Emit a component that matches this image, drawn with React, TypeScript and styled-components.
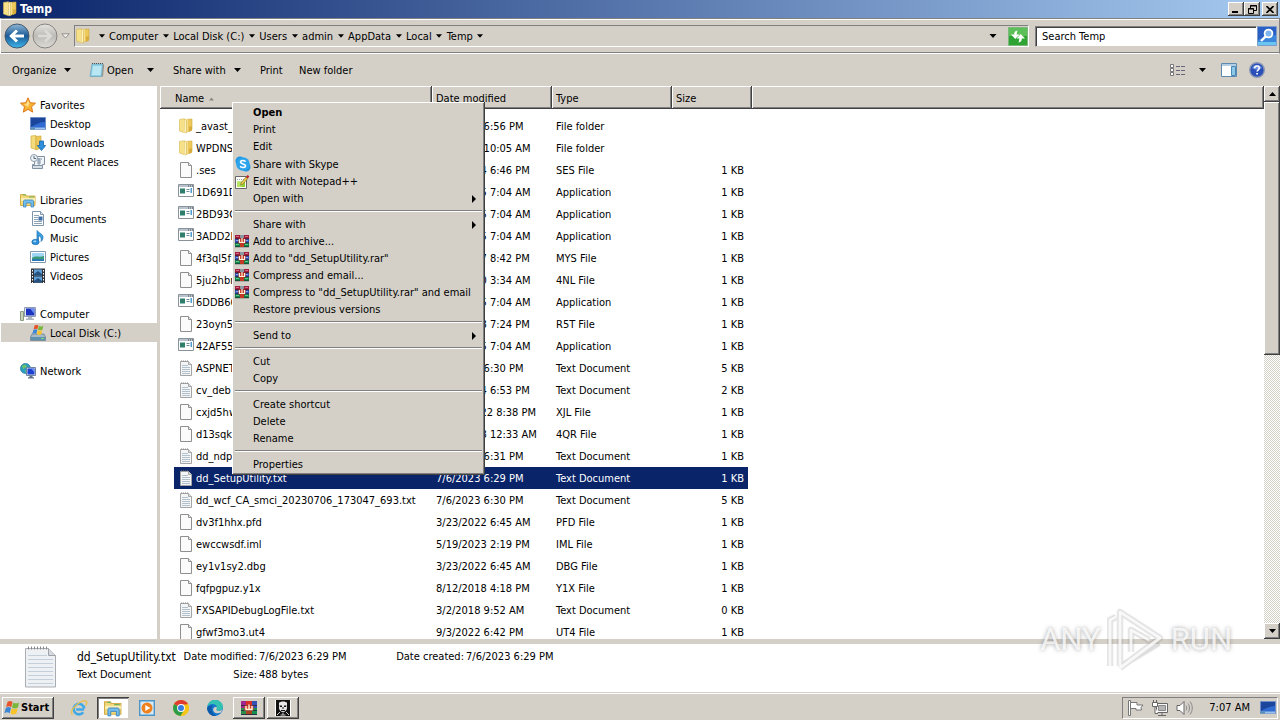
import React from "react";
import styled, { createGlobalStyle, css } from "styled-components";

const FONT = `Tahoma, "DejaVu Sans Condensed", "DejaVu Sans", sans-serif`;
const FACE = "#d4d0c8";

const Global = createGlobalStyle`
  *, *::before { box-sizing: border-box; }
  html, body { margin: 0; height: 100%; }
  #root { height: 100%; }
  body { font: 11px/17px ${FONT}; color: #000; background: ${FACE}; overflow: hidden; }
  button, input { font: inherit; color: inherit; margin: 0; padding: 0; border: 0; background: none; border-radius: 0; }
  a { color: inherit; text-decoration: none; }
  ul { list-style: none; margin: 0; padding: 0; }
  svg { display: block; flex: none; }
`;

const raised = css`
  background: ${FACE};
  box-shadow: inset -1px -1px #404040, inset 1px 1px #fff, inset -2px -2px #808080;
`;

const Window = styled.div`
  display: flex;
  flex-direction: column;
  height: 100vh;
  position: relative;
`;

/* Title bar */
const TitleBar = styled.header`
  display: flex;
  align-items: center;
  height: 18px;
  padding: 0 2px;
  background: linear-gradient(to right, #0a246a, #a6caf0);
  color: #fff;
`;
const Title = styled.h1`
  margin: 0 auto 0 2px;
  font: bold 12px/17px ${FONT};
`;
const CaptionButton = styled.button<{ $gap?: boolean }>`
  ${raised}
  display: grid;
  place-items: center;
  width: 16px;
  height: 14px;
  margin-left: ${(p) => (p.$gap ? 2 : 0)}px;
`;

/* Address row */
const NavBar = styled.nav`
  display: flex;
  align-items: center;
  height: 36px;
  padding: 0 2px;
  border: 1px solid #808080;
  border-left-color: #fff;
  border-bottom-color: #fff;
  box-shadow: inset 0 1px #fff, inset 0 -1px #808080;
`;
const RoundButton = styled.button`
  width: 28px;
  height: 28px;
  display: grid;
  place-items: center;
`;
const SmallButton = styled.button`
  width: 15px;
  height: 22px;
  padding-right: 3px;
  display: grid;
  place-items: center;
`;
const AddressBox = styled.div`
  flex: 1;
  display: flex;
  align-items: center;
  height: 22px;
  border: 1px solid #808080;
  border-bottom-color: #fff;
  border-right-color: #fff;
`;
const Crumbs = styled.div`
  display: flex;
  align-items: center;
  margin-left: 4px;
  flex: 1;
`;
const Crumb = styled.a`
  display: block;
  padding: 0 1px;
`;
const CrumbArrow = styled.button`
  width: 13px;
  height: 20px;
  display: grid;
  place-items: center;
`;
const IconButton = styled.button<{ $w?: number }>`
  width: ${(p) => p.$w ?? 20}px;
  height: 20px;
  display: grid;
  place-items: center;
`;
const SearchInput = styled.input`
  width: 222px;
  height: 21px;
  margin-left: 6px;
  padding: 0 6px;
  background: #fff;
  border: 1px solid #808080;
  border-right-color: #fff;
  border-bottom-color: ${FACE};
  box-shadow: inset 1px 1px #404040;
  &::placeholder { color: #000; opacity: 1; }
`;

/* Command row */
const Toolbar = styled.div`
  display: flex;
  align-items: center;
  height: 32px;
  padding: 0 12px;
`;
const Command = styled.button<{ $w: number }>`
  display: flex;
  align-items: center;
  width: ${(p) => p.$w}px;
  height: 24px;
  white-space: nowrap;
`;
const CommandArrow = styled.span`
  margin: 0 19px 0 auto;
`;
const CommandIcon = styled.span`
  margin: 0 2px 0 -1px;
`;
const ToolSpacer = styled.div`
  flex: 1;
`;

/* Main area */
const Body = styled.div`
  flex: 1;
  min-height: 0;
  display: flex;
`;
const Sidebar = styled.aside`
  width: 157px;
  padding-top: 9px;
  background: #fff;
`;
const Splitter = styled.div`
  width: 3px;
  background: ${FACE};
`;
const TreeGroup = styled.ul`
  margin-bottom: 19px;
`;
const TreeItem = styled.a<{ $child?: boolean; $selected?: boolean }>`
  display: flex;
  align-items: center;
  gap: 4px;
  height: 19px;
  margin-left: 1px;
  padding-left: ${(p) => (p.$child ? 29 : 19)}px;
  background: ${(p) => (p.$selected ? FACE : "transparent")};
`;
const TreeLabel = styled.span`
  padding-top: 2px;
`;

const ListPane = styled.main`
  flex: 1;
  min-width: 0;
  overflow: hidden;
  background: #fff;
`;
const FileTable = styled.table`
  display: block;
  border-collapse: collapse;
`;
const Head = styled.thead`
  display: block;
`;
const HeadRow = styled.tr`
  display: grid;
  grid-template-columns: 272px 120px 120px 80px 1fr;
  height: 23px;
`;
const HeadCell = styled.th`
  ${raised}
  display: flex;
  align-items: center;
  gap: 5px;
  padding: 2px 0 0 4px;
  font-weight: normal;
  text-align: left;
  &:first-child { padding-left: 15px; }
`;
const Rows = styled.tbody`
  display: block;
  padding: 6px 0 0 14px;
`;
const FileRow = styled.tr<{ $selected?: boolean }>`
  display: grid;
  grid-template-columns: 258px 120px 120px 76px;
  align-items: center;
  width: 574px;
  height: 22px;
  ${(p) => p.$selected && css`background: #0a246a; color: #fff;`}
`;
const Cell = styled.td<{ $right?: boolean }>`
  padding: 0 4px;
  white-space: nowrap;
  text-align: ${(p) => (p.$right ? "right" : "left")};
`;
const NameCell = styled.td`
  display: flex;
  align-items: center;
  gap: 2px;
  padding: 0 0 0 4px;
  white-space: nowrap;
`;

const Scrollbar = styled.div`
  display: flex;
  flex-direction: column;
  width: 16px;
  background: repeating-conic-gradient(#fff 0 25%, ${FACE} 0 50%) 0 0 / 2px 2px;
`;
const ScrollButton = styled.button`
  ${raised}
  width: 16px;
  height: 16px;
  display: grid;
  place-items: center;
`;
const Thumb = styled.div`
  ${raised}
  height: 253px;
  margin-bottom: auto;
`;

/* Details pane */
const Details = styled.section`
  display: flex;
  height: 53px;
  padding: 2px 0 0 24px;
  border-top: 5px solid ${FACE};
  background: #fff;
`;
const DetailGrid = styled.div`
  display: grid;
  grid-template-columns: 106px 76px 134px 73px auto;
  grid-template-rows: 18px 18px;
  line-height: 18px;
  margin: 2px 0 0 20px;
  white-space: nowrap;
`;
const DetailName = styled.strong`
  font-weight: normal;
  font-size: 12px;
`;
const DetailLabel = styled.span`
  padding-right: 2px;
  text-align: right;
`;

/* Taskbar */
const Taskbar = styled.footer`
  display: flex;
  align-items: center;
  height: 28px;
  padding: 2px 2px 0;
  border-top: 1px solid ${FACE};
  box-shadow: inset 0 1px #fff;
`;
const StartButton = styled.button`
  ${raised}
  display: flex;
  align-items: center;
  gap: 1px;
  width: 52px;
  height: 22px;
  margin-right: 9px;
  padding-left: 2px;
  font-weight: bold;
`;
const TaskButton = styled.button<{ $state?: "open" | "active" }>`
  display: grid;
  place-items: center;
  width: 32px;
  height: 22px;
  margin-right: 2px;
  ${(p) => p.$state === "open" && raised}
  ${(p) =>
    p.$state === "active" &&
    css`background: #fff; box-shadow: inset 1px 1px #404040, inset -1px -1px #d4d0c8, inset 2px 2px #808080;`}
`;
const Tray = styled.div`
  display: flex;
  align-items: center;
  gap: 8px;
  height: 22px;
  margin-left: auto;
  padding: 0 1px 0 5px;
  border: 1px solid #808080;
  border-right-color: #fff;
  border-bottom-color: #fff;
`;
const Clock = styled.time`
  margin: 0 2px 0 8px;
`;

/* Context menu */
const Menu = styled.ul`
  position: absolute;
  left: 232px;
  top: 102px;
  width: 253px;
  padding: 2px;
  background: ${FACE};
  box-shadow: inset -1px -1px #404040, inset 1px 1px #fff, inset -2px -2px #808080;
`;
const MenuItem = styled.button<{ $bold?: boolean; $tall?: boolean }>`
  display: grid;
  grid-template-columns: 19px 1fr 12px;
  align-items: center;
  width: 100%;
  height: ${(p) => (p.$tall ? 18 : 17)}px;
  font-weight: ${(p) => (p.$bold ? "bold" : "normal")};
  text-align: left;
  white-space: nowrap;
`;
const MenuIcon = styled.span`
  height: 16px;
  padding-left: 1px;
`;
const Separator = styled.li`
  height: 9px;
  padding: 3px 1px;
  &::before {
    content: "";
    display: block;
    height: 2px;
    border-top: 1px solid #808080;
    border-bottom: 1px solid #fff;
  }
`;

const Watermark = styled.div`
  position: absolute;
  right: 48px;
  bottom: 46px;
  display: flex;
  align-items: center;
  gap: 6px;
  height: 68px;
  color: rgba(255, 255, 255, 0.8);
  font: 31px/68px Roboto, sans-serif;
  text-shadow: 0 0 4px rgba(100, 100, 100, 0.6);
  pointer-events: none;
`;

/* Icons */
const Svg = ({ w = 16, h = 16, box, children }: { w?: number; h?: number; box?: string; children: React.ReactNode }) => (
  <svg width={w} height={h} viewBox={box ?? `0 0 ${w} ${h}`} aria-hidden="true">{children}</svg>
);
const Down = ({ w = 7, fill = "#000" }: { w?: number; fill?: string }) => (
  <svg width={w} height={4} viewBox="0 0 7 4" aria-hidden="true"><path d="M0 0h7L3.5 4z" fill={fill} /></svg>
);
const CrumbDown = () => <Down w={6} />;
const Up = ({ fill = "#000", w = 7 }: { w?: number; fill?: string }) => (
  <svg width={w} height={4} viewBox="0 0 7 4" aria-hidden="true"><path d="M0 4h7L3.5 0z" fill={fill} /></svg>
);
const Right = () => (
  <svg width={5} height={8} viewBox="0 0 5 8" aria-hidden="true"><path d="M1 0v8l4-4z" fill="#000" /></svg>
);

const FolderIcon = () => (
  <Svg>
    <path d="M1.500 1.500l5-.8v14l-5-1.700z" fill="#f6e08a" stroke="#d9b84c" strokeWidth=".6" />
    <path d="M6.500 1.500L14 1v10.500L7.500 15z" fill="#ecc95a" stroke="#cfa93d" strokeWidth=".6" />
    <path d="M6.500 1.800l3-.6v12.600l-3 .9z" fill="#fdf2bc" />
    <path d="M8.500 2v12" stroke="#d9b84c" strokeWidth=".7" />
    <path d="M11 8.500h3v4L11 14z" fill="#d8ac3c" />
  </Svg>
);
const BlankIcon = () => (
  <Svg>
    <path d="M2.500.5h8l3 3v12h-11z" fill="#fbfbfb" stroke="#8f8f8f" />
    <path d="M10.500.5v3h3" fill="#e8e8e8" stroke="#8f8f8f" />
  </Svg>
);
const TextIcon = () => (
  <Svg>
    <path d="M2.500 1.500h8l3 3v11h-11z" fill="#f3f5f7" stroke="#a4a4a4" />
    <path d="M10.500 1.500v3h3" fill="#ddd" stroke="#a4a4a4" />
    <path d="M3 1h8" stroke="#888" strokeDasharray="1 1" />
    <path d="M4 5.500h6M4 7.500h8M4 9.500h8M4 11.500h8M4 13.500h8" stroke="#b2c0cc" />
  </Svg>
);
const ExeIcon = () => (
  <Svg>
    <path d="M.5.5h15v12H.5z" fill="#fff" stroke="#8a9299" />
    <path d="M1 1h14v2H1z" fill="#b9c3cd" />
    <path d="M10 2h1M12 2h1M14 2h1" stroke="#445" />
    <path d="M2 4.500h5v5H2z" fill="#2f7d6b" />
    <path d="M8.500 5.500h3M8.500 7.500h3" stroke="#6f8c9a" />
    <path d="M12.500 4h1.500v5h-1.500z" fill="#4c9bd0" />
  </Svg>
);
const StarIcon = () => (
  <Svg>
    <path d="M8 .8l2.200 4.900 5.300.5-4 3.600 1.200 5.300L8 12.400l-4.700 2.700 1.200-5.300-4-3.600 5.300-.5z" fill="#f9b233" stroke="#d9771c" />
    <path d="M8 3l1.400 3.500L8 10 4 7l2.600-.4z" fill="#ffe08a" />
  </Svg>
);
const MonitorIcon = () => (
  <Svg>
    <path d="M.5 1.500h15v12H.5z" fill="#2f6bd0" stroke="#6d8ec9" />
    <path d="M1 2h14v4C10 6 6 8 1 11z" fill="#1c459c" />
    <path d="M1 11.500h14v2H1z" fill="#9fc0ea" />
    <path d="M1 11.500h4v2H1z" fill="#5b8fae" />
  </Svg>
);
const DownloadsIcon = () => (
  <Svg>
    <path d="M1 1l5-.5v14L1 13z" fill="#f4dc7c" stroke="#d1ad45" strokeWidth=".7" />
    <path d="M6 1.500l5-.5v12l-5 2z" fill="#ecc95a" stroke="#cfa93d" strokeWidth=".7" />
    <path d="M9.500 6h4v4.500h2.200L11.500 15.500 7.300 10.500h2.200z" fill="#2f8fdc" stroke="#1464ab" strokeWidth=".8" />
  </Svg>
);
const RecentIcon = () => (
  <Svg>
    <path d="M4.500 2.500h10v8h-2v3h-10v-3h2z" fill="#f2f5f8" stroke="#8091a1" />
    <path d="M7 5h5M7 7h4M7 9h4M9 4v7" stroke="#8095a8" />
    <path d="M2.500 11.500h10v3h-10z" fill="#d7dfe6" stroke="#8091a1" />
    <circle cx="4" cy="4" r="3.500" fill="#eef3f7" stroke="#8b9cab" />
    <path d="M4 2v2.500h2" fill="none" stroke="#567" />
  </Svg>
);
const LibraryIcon = ({ w = 16 }: { w?: number }) => (
  <Svg w={w} h={w} box="0 0 16 16">
    <path d="M.5 2.500h5l1 1.500h8.500v9.500H.5z" fill="#f2d878" stroke="#d3ae48" />
    <path d="M1 6h14v3H1z" fill="#fbeeb5" />
    <path d="M3 3h3M9 5h5" stroke="#6fb25c" />
    <path d="M3.500 15V9.500c0-1 .5-1.500 1.500-1.500h7c1 0 1.500.5 1.500 1.500V15h-2.500v-4H6v4z" fill="#74bdec" stroke="#3a86bf" strokeWidth=".8" />
  </Svg>
);
const DocumentsIcon = () => (
  <Svg>
    <path d="M2.500.5h8l3 3v11h-11z" fill="#fff" stroke="#7f95ab" />
    <path d="M10.500.5v3h3" fill="#dbe5ee" stroke="#7f95ab" />
    <path d="M4 4.500h5M4 6.500h4M4 8.500h4M4 10.500h8M4 12.500h8" stroke="#8fa3b6" />
    <path d="M8.500 5.500h4v4h-4z" fill="#3f6ea6" />
  </Svg>
);
const MusicIcon = () => (
  <Svg>
    <path d="M7 .5c2 3 6 3 6 7 0 2-1 3-2 4 1-4-1-5-2.500-6V12H7z" fill="#3aa0e2" stroke="#1c6fb0" strokeWidth=".7" />
    <ellipse cx="5.500" cy="12" rx="3.700" ry="2.700" fill="#2f8fd8" stroke="#1c6fb0" strokeWidth=".7" />
    <ellipse cx="4.800" cy="11.300" rx="1.500" ry=".9" fill="#a6dcfa" />
  </Svg>
);
const PicturesIcon = () => (
  <Svg>
    <path d="M.5 2.500h15v11H.5z" fill="#fff" stroke="#8299ad" />
    <path d="M2 4h12v8H2z" fill="#9fd6f5" />
    <path d="M2 9c4-3 7 0 12-2v5H2z" fill="#3a9a78" />
    <path d="M2 10.500c4-1 8 0 12-.5v2H2z" fill="#2879b5" />
  </Svg>
);
const VideosIcon = () => (
  <Svg>
    <path d="M1 .5h14v14.500H1z" fill="#30343a" />
    <path d="M4 1.500h8v6H4zM4 8.500h8v6H4z" fill="#5e9fd8" />
    <path d="M4 6l4-3 4 3v1.500H4zM4 13l4-3 4 3v1.500H4z" fill="#28507c" />
    <path d="M2.500 2v13M13.500 2v13" stroke="#fff" strokeDasharray="1.500 1.500" />
  </Svg>
);
const ComputerIcon = () => (
  <Svg>
    <path d="M.5 5.500h3v9h-3z" fill="#c8d6b8" stroke="#8a9a80" />
    <path d="M4.500 1.500h11v9h-11z" fill="#dfe6ee" stroke="#8d9cb0" />
    <path d="M6 2.500h8.500v7H6z" fill="#1b35c0" />
    <path d="M10 2.500h4.500V8z" fill="#6e8ff0" />
    <path d="M8 11h4v1.500h2V14H6v-1.500h2z" fill="#aab5c0" />
  </Svg>
);
const Flag = () => (
  <>
    <path d="M3.500 2c2-1.300 3.500-1.200 5 0L7.200 7.200C5.600 6 4 6 2 7.200z" fill="#e8542a" />
    <path d="M9.200 2.400c2 1.200 3.800 1.200 6 0L13.900 7.500c-2.200 1.200-4 1.200-6 0z" fill="#7ab83c" />
    <path d="M1.800 8c2-1.300 3.600-1.200 5.200 0l-1.300 5.200C4.100 12 2.500 12 .4 13.200z" fill="#3c86d6" />
    <path d="M7.700 8.300c2 1.200 3.800 1.200 6 0l-1.300 5.200c-2.200 1.200-4 1.200-6 0z" fill="#f8c22c" />
  </>
);
const WindowsFlag = () => <Svg><Flag /></Svg>;
const DiskIcon = () => (
  <Svg>
    <path d="M2 9h12l1.500 3v3.500H.5V12z" fill="#a9bac7" stroke="#6a8193" strokeWidth=".8" />
    <path d="M1 12h14v3H1z" fill="#5f93ad" />
    <path d="M11.500 13.500h2" stroke="#7dff6a" />
    <g transform="translate(2 -1) scale(.75)"><Flag /></g>
  </Svg>
);
const NetworkIcon = () => (
  <Svg>
    <circle cx="5.500" cy="5.500" r="5" fill="#2a9fc0" stroke="#176f98" strokeWidth=".7" />
    <path d="M2 3c2-2 4-1 5 0L5 5 3 6zM5 7l3 1-2 2.500z" fill="#6cc26a" />
    <path d="M6.500 4.500h9v8h-9z" fill="#dfe6ee" stroke="#6f83a0" />
    <path d="M7.500 5.500h7v6h-7z" fill="#1b3fd0" />
    <path d="M11 5.500h3.500v4z" fill="#6e8ff0" />
    <path d="M9.500 13h3v1.200h1.500v1.300H8v-1.300h1.500z" fill="#5f7088" />
  </Svg>
);
const SkypeIcon = () => (
  <Svg>
    <circle cx="5" cy="5" r="4.500" fill="#2196e3" />
    <circle cx="11" cy="11" r="4.500" fill="#2196e3" />
    <circle cx="8" cy="8" r="6.800" fill="#2ba4ec" />
    <path d="M10.500 5.800C9.800 4 5.500 4 5.500 6.100c0 2.300 5 1.300 5 3.700 0 2.300-4.600 2.300-5.200.3" fill="none" stroke="#fff" strokeWidth="1.600" />
  </Svg>
);
const NotepadPlusIcon = () => (
  <Svg w={15} h={15} box="0 1 15 15">
    <path d="M.5 3.500h11v12H.5z" fill="#fff" stroke="#666" />
    <path d="M2 8.500h8V14H2z" fill="#8fd02f" />
    <path d="M2 8.500h3l3 3-2 2.500H2z" fill="#b8e465" />
    <path d="M2 6.500h7" stroke="#9aa" strokeDasharray="1 1" />
    <path d="M6 10l5-6 1.800 1.400-5 5.800-2.200 1z" fill="#f2d04b" stroke="#6b5a20" strokeWidth=".6" />
    <path d="M11 4l1.500-2 1.900 1.300-1.600 2.100z" fill="#c3262c" />
  </Svg>
);
const RarIcon = () => (
  <Svg w={14} h={14} box="0 0 14 14">
    <path d="M0 1h14v4H0z" fill="#a01c3c" />
    <path d="M0 5h14v4H0z" fill="#3452b4" />
    <path d="M0 9h14v4H0z" fill="#12854a" />
    <path d="M1 2.500h3M10 2.500h3" stroke="#d66a84" />
    <path d="M1 6.500h3M10 6.500h3" stroke="#8aa6ea" />
    <path d="M1 10.500h3M10 10.500h3" stroke="#62c690" />
    <path d="M0 4.800h14M0 8.800h14M0 12.800h14" stroke="#1c1c2a" strokeWidth=".7" />
    <path d="M5 1h4v3H5z" fill="#8b97a0" />
    <path d="M5 9h4v4H5z" fill="#c23a24" />
    <path d="M3.500 4.500h7v5h-7z" fill="#c4301f" />
    <path d="M4.500 5v3.500h5V5M7 4v4.500" fill="none" stroke="#fff4dc" strokeWidth="1.200" />
  </Svg>
);
const RarTaskIcon = () => (
  <Svg>
    <path d="M0 1h5v7H0z" fill="#a0288c" />
    <path d="M5 1h6v7H5z" fill="#d83024" />
    <path d="M11 1h5v7h-5z" fill="#3452b4" />
    <path d="M0 8h5v7H0z" fill="#2c8c4a" />
    <path d="M5 8h6v7H5z" fill="#a8441c" />
    <path d="M11 8h5v7h-5z" fill="#159050" />
    <path d="M0 5.500h16M0 10.500h16M0 14.500h16" stroke="#1f2440" strokeWidth=".8" />
    <path d="M3.500 5.500h9v5h-9z" fill="#d8442c" />
    <path d="M5 6v3.500h6V6M8 4.500v5" fill="none" stroke="#fff4dc" strokeWidth="1.400" />
  </Svg>
);

const BackIcon = () => (
  <Svg w={26} h={26}>
    <defs>
      <linearGradient id="back" x2="0" y2="1">
        <stop offset="0" stopColor="#8fb8d6" />
        <stop offset=".5" stopColor="#1a5a96" />
        <stop offset="1" stopColor="#3fb8ee" />
      </linearGradient>
    </defs>
    <circle cx="13" cy="13" r="12" fill="url(#back)" stroke="#45586b" />
    <path d="M20 13H8M13 7.500L7.300 13l5.700 5.500" fill="none" stroke="#fff" strokeWidth="3" />
  </Svg>
);
const ForwardIcon = () => (
  <Svg w={26} h={26}>
    <defs>
      <linearGradient id="fwd" x2="0" y2="1">
        <stop offset="0" stopColor="#e6e4e0" />
        <stop offset=".5" stopColor="#bdbbb6" />
        <stop offset="1" stopColor="#dedcd7" />
      </linearGradient>
    </defs>
    <circle cx="13" cy="13" r="12" fill="url(#fwd)" stroke="#85837f" />
    <path d="M6 13h12M13 7.500l5.700 5.500-5.700 5.500" fill="none" stroke="#dddbd7" strokeWidth="2.500" />
  </Svg>
);
const HollowDown = () => (
  <Svg w={9} h={6}><path d="M.8.8h7.400L4.500 5z" fill="#f2f0ec" stroke="#8a8884" strokeWidth=".9" /></Svg>
);
const RefreshIcon = () => (
  <Svg w={20} h={19}>
    <path d="M.5.5h19v18H.5z" fill="#2fa435" stroke="#7fb87f" />
    <path d="M1 1h18v8H1z" fill="#5cbf58" />
    <path d="M9.500 3.500C7 4 6.200 5 6.200 7.500H3l4.300 4.500L11.500 7.500H8.700c0-1.500.3-2.500.8-4z" fill="#fff" />
    <path d="M10.500 15.500c2.500-.5 3.300-1.500 3.300-4H17L12.700 7 8.500 11.500h2.800c0 1.500-.3 2.500-.8 4z" fill="#fff" />
  </Svg>
);
const MagnifierIcon = () => (
  <Svg w={20} h={20}>
    <path d="M.5.5h19v19H.5z" fill="#3c86dc" stroke="#7d9cc9" />
    <path d="M1 1h18v8C12 9 7 11 1 14z" fill="#2a5fc4" />
    <path d="M1 16h18v3H1z" fill="#69c6f2" />
    <circle cx="11.500" cy="7.500" r="3.900" fill="#7fb6f0" stroke="#fff" strokeWidth="1.800" />
    <path d="M8.700 10.300L4 15" stroke="#fff" strokeWidth="2.400" />
  </Svg>
);
const NotepadIcon = () => (
  <Svg>
    <path d="M3 2h11L12.500 14.500H1z" fill="#8fd0e6" stroke="#6fa5ba" strokeWidth=".8" />
    <path d="M4 4h8.500l-1 9H2.800z" fill="#b9e6f3" />
    <path d="M3 1.500h12" stroke="#555" strokeDasharray="1 1" />
    <path d="M13.500 14.500l1-12" stroke="#8f8a80" />
  </Svg>
);
const ViewIcon = () => (
  <Svg w={16} h={13}>
    <path d="M.5.5h3v3h-3zM.5 4.500h3v3h-3zM.5 8.500h3v3h-3z" fill="#fff" stroke="#777" />
    <path d="M6 2.500h4M11 2.500h4M6 6.500h4M11 6.500h4M6 10.500h4M11 10.500h4" stroke="#667" />
  </Svg>
);
const PaneIcon = () => (
  <Svg w={16} h={14}>
    <path d="M.5.5h15v13H.5z" fill="#fff" stroke="#5c89ae" />
    <path d="M1 1h14v2H1z" fill="#b4cfe4" />
    <path d="M10.500 3.500h4v9h-4z" fill="#8cc8e8" stroke="#4b87b4" />
  </Svg>
);
const HelpIcon = () => (
  <Svg>
    <circle cx="8" cy="8" r="7.300" fill="#2a4fb8" stroke="#8b97b5" strokeWidth="1.400" />
    <path d="M3 6a5.500 5 0 0110 0c-3 2-7 2-10 0z" fill="#6f92e0" />
    <path d="M5.700 6.200C5.700 3.200 10.300 3.300 10.300 6c0 1.800-2.200 1.800-2.200 3.600" fill="none" stroke="#fff" strokeWidth="1.600" />
    <path d="M7.200 10.900h1.800v1.700H7.200z" fill="#fff" />
  </Svg>
);
const BigTextIcon = () => (
  <Svg w={33} h={42}>
    <path d="M1.500 2.500h23l7 7v31.500h-30z" fill="#eef1f4" stroke="#a9adb2" />
    <path d="M24.500 2.500v7h7" fill="#d6dade" stroke="#9da2a8" />
    <path d="M4 2h20" stroke="#888" strokeWidth="3" strokeDasharray="1 2" />
    <path d="M4 9.500h19M4 13.500h25M4 17.500h25M4 21.500h25M4 25.500h25M4 29.500h25M4 33.500h25M4 37.500h25" stroke="#c3d0dc" />
  </Svg>
);
const IeIcon = () => (
  <Svg w={18} h={18}>
    <path d="M14 10.500H6.200M14.200 9.500a5.300 5.300 0 10-1 3.700" fill="none" stroke="#3fa9e8" strokeWidth="2.600" />
    <path d="M2.500 15.500C-2 12 10 1 15.800 2c2 .6 1 3-.3 4.500" fill="none" stroke="#e9bf4a" strokeWidth="1.300" />
  </Svg>
);
const PlayerIcon = () => (
  <Svg>
    <path d="M.7.7h14.600v14.600H.7z" fill="#d7eaf6" stroke="#4b95c8" strokeWidth="1.400" />
    <circle cx="8" cy="8" r="5.500" fill="#f0821e" />
    <path d="M6.300 5l5 3-5 3z" fill="#fff" />
  </Svg>
);
const ChromeIcon = () => (
  <Svg>
    <circle cx="8" cy="8" r="8" fill="#f5c518" />
    <path d="M8 8L1.100 4A8 8 0 0114.900 4z" fill="#df3b2f" />
    <path d="M8 8L1.100 4a8 8 0 006.500 12l4-6z" fill="#2d9c4a" />
    <path d="M8 4.400h7.100A8 8 0 017.600 16l3.500-6z" fill="#f5c518" />
    <circle cx="8" cy="8" r="3.900" fill="#fff" />
    <circle cx="8" cy="8" r="3" fill="#3a7de0" />
  </Svg>
);
const EdgeIcon = () => (
  <Svg>
    <circle cx="8" cy="8" r="7.900" fill="#1577cf" />
    <path d="M.3 7C1 2.500 4.200.1 8.200.1c4.800 0 7.700 3.400 7.700 6.700 0 2.500-2 4-4.200 4-1.700 0-2.400-.8-2.400-1.300 0-.6.7-.8.7-2C10 5.500 8 4 5.500 4 3 4 1 5.500.3 7z" fill="#35c1b1" />
    <path d="M10 7.500c0 1.200-.7 1.400-.7 2 0 .6.900 1.400 2.600 1.400 1.600 0 2.600-.5 3.400-1.300-.2 1-.8 2.200-1.500 3-4 2-8-.4-7.600-3.400C6.400 7.500 8 6.300 10 7.500z" fill="#d4d0c8" />
    <path d="M5.600 6c-2 2.500-1 8 3.700 9.900C4 17 .2 12.500.1 8 1.500 5.500 4 5 5.600 6z" fill="#0f5aa8" />
  </Svg>
);
const MaskIcon = () => (
  <Svg>
    <path d="M0 0h16v16H0z" fill="#fff" />
    <path d="M1 0h14v16H1z" fill="#111" />
    <path d="M4 3c1-2 7-2 8 0v5c0 2-2 4-4 4s-4-2-4-4z" fill="#e8e8e8" />
    <path d="M4.500 5.500h2.500v1.500H5zM9 5.500h2.500l-.5 1.500H9zM7.500 7h1v2h-1zM6 10h4v1H6z" fill="#111" />
    <path d="M2 15l3-3M14 15l-3-3M8 12.500V15M5.500 15h5" stroke="#ccc" />
  </Svg>
);
const FlagIcon = () => (
  <Svg>
    <path d="M.5.500v15h2V.5z" fill="#fff" stroke="#777" />
    <path d="M2.500 2.500h6.500v2.500h6l-2 2.500 .5 2.500H8V8.500H2.500z" fill="#fff" stroke="#777" />
  </Svg>
);
const TrayNetIcon = () => (
  <Svg>
    <path d="M4.500 3.500h11v9h-11z" fill="#f7f7f7" stroke="#666" />
    <path d="M6.500 5.500h7v5h-7z" fill="#b5b5b5" stroke="#888" />
    <path d="M6 15.500h8M10 13v2" stroke="#666" />
    <path d="M.5 2.500h5v4h-5zM1.500 0v2M4.500 0v2M3 6.500v7h3" fill="#fff" stroke="#666" />
  </Svg>
);
const SpeakerIcon = () => (
  <Svg w={17}>
    <path d="M1 5.500h3l4-4v13l-4-4H1z" fill="#fff" stroke="#666" />
    <path d="M10 5.500c1 1.500 1 3.500 0 5M12 3.500c2 3 2 6 0 9M14 1.500c3 4 3 9 0 13" fill="none" stroke="#888" />
  </Svg>
);
const PlayMark = () => (
  <svg width="58" height="68" viewBox="0 0 58 68" aria-hidden="true">
    <g fill="none" strokeLinejoin="round">
      <path d="M3 60V14l6-3M13 60V6l40 26-40 30M24 46V24l18 10M14 60l38-23" stroke="#777" strokeWidth="7" opacity=".12" />
      <path d="M3 60V14l6-3M13 60V6l40 26-40 30M24 46V24l18 10M14 60l38-23" stroke="#777" strokeWidth="5" opacity=".14" />
      <path d="M3 60V14l6-3M13 60V6l40 26-40 30M24 46V24l18 10" stroke="#fff" strokeWidth="3" opacity=".8" />
    </g>
  </svg>
);

/* Data */
const crumbs = ["Computer", "Local Disk (C:)", "Users", "admin", "AppData", "Local", "Temp"];

type Node = { label: string; Icon: React.FC; selected?: boolean };
const tree: Node[][] = [
  [
    { label: "Favorites", Icon: StarIcon },
    { label: "Desktop", Icon: MonitorIcon },
    { label: "Downloads", Icon: DownloadsIcon },
    { label: "Recent Places", Icon: RecentIcon },
  ],
  [
    { label: "Libraries", Icon: () => <LibraryIcon /> },
    { label: "Documents", Icon: DocumentsIcon },
    { label: "Music", Icon: MusicIcon },
    { label: "Pictures", Icon: PicturesIcon },
    { label: "Videos", Icon: VideosIcon },
  ],
  [
    { label: "Computer", Icon: ComputerIcon },
    { label: "Local Disk (C:)", Icon: DiskIcon, selected: true },
  ],
  [{ label: "Network", Icon: NetworkIcon }],
];

const icons = { folder: FolderIcon, blank: BlankIcon, exe: ExeIcon, text: TextIcon };
type File = [keyof typeof icons, string, string, string, string];
const files: File[] = [
  ["folder", "_avast_", "7/6/2023 6:56 PM", "File folder", ""],
  ["folder", "WPDNSE", "7/6/2023 10:05 AM", "File folder", ""],
  ["blank", ".ses", "7/15/2024 6:46 PM", "SES File", "1 KB"],
  ["exe", "1D691D", "3/15/2025 7:04 AM", "Application", "1 KB"],
  ["exe", "2BD93C", "3/15/2025 7:04 AM", "Application", "1 KB"],
  ["exe", "3ADD2B", "3/15/2025 7:04 AM", "Application", "1 KB"],
  ["blank", "4f3ql5f", "12/9/2017 8:42 PM", "MYS File", "1 KB"],
  ["blank", "5ju2hbn", "5/18/2020 3:34 AM", "4NL File", "1 KB"],
  ["exe", "6DDB66", "3/15/2025 7:04 AM", "Application", "1 KB"],
  ["blank", "23oyn5", "5/12/2018 7:24 PM", "R5T File", "1 KB"],
  ["exe", "42AF55", "3/15/2025 7:04 AM", "Application", "1 KB"],
  ["text", "ASPNET", "7/6/2023 6:30 PM", "Text Document", "5 KB"],
  ["text", "cv_deb", "7/15/2024 6:53 PM", "Text Document", "2 KB"],
  ["blank", "cxjd5hw", "11/10/2022 8:38 PM", "XJL File", "1 KB"],
  ["blank", "d13sqk", "3/11/2018 12:33 AM", "4QR File", "1 KB"],
  ["text", "dd_ndp", "7/6/2023 6:31 PM", "Text Document", "1 KB"],
  ["text", "dd_SetupUtility.txt", "7/6/2023 6:29 PM", "Text Document", "1 KB"],
  ["text", "dd_wcf_CA_smci_20230706_173047_693.txt", "7/6/2023 6:30 PM", "Text Document", "5 KB"],
  ["blank", "dv3f1hhx.pfd", "3/23/2022 6:45 AM", "PFD File", "1 KB"],
  ["blank", "ewccwsdf.iml", "5/19/2023 2:19 PM", "IML File", "1 KB"],
  ["blank", "ey1v1sy2.dbg", "3/23/2022 6:45 AM", "DBG File", "1 KB"],
  ["blank", "fqfpgpuz.y1x", "8/12/2018 4:18 PM", "Y1X File", "1 KB"],
  ["text", "FXSAPIDebugLogFile.txt", "3/2/2018 9:52 AM", "Text Document", "0 KB"],
  ["blank", "gfwf3mo3.ut4", "9/3/2022 6:42 PM", "UT4 File", "1 KB"],
];

type Item = { label: string; Icon?: React.FC; sub?: boolean; bold?: boolean; tall?: boolean };
const menu: (Item | null)[] = [
  { label: "Open", bold: true },
  { label: "Print" },
  { label: "Edit" },
  { label: "Share with Skype", Icon: SkypeIcon, tall: true },
  { label: "Edit with Notepad++", Icon: NotepadPlusIcon },
  { label: "Open with", sub: true },
  null,
  { label: "Share with", sub: true },
  { label: "Add to archive...", Icon: RarIcon },
  { label: 'Add to "dd_SetupUtility.rar"', Icon: RarIcon },
  { label: "Compress and email...", Icon: RarIcon },
  { label: 'Compress to "dd_SetupUtility.rar" and email', Icon: RarIcon },
  { label: "Restore previous versions" },
  null,
  { label: "Send to", sub: true },
  null,
  { label: "Cut" },
  { label: "Copy" },
  null,
  { label: "Create shortcut" },
  { label: "Delete" },
  { label: "Rename" },
  null,
  { label: "Properties" },
];

export default function App() {
  return (
    <Window>
      <Global />
      <TitleBar>
        <FolderIcon />
        <Title>Temp</Title>
        <CaptionButton aria-label="Minimize">
          <Svg w={8} h={8}><path d="M0 6h6v2H0z" /></Svg>
        </CaptionButton>
        <CaptionButton aria-label="Restore">
          <Svg w={9} h={9}><path d="M2.500 3V.5h6v5H6M2 1h7" fill="none" stroke="#000" /><path d="M.5 3.500h5v5h-5zM0 4h6" fill="none" stroke="#000" /></Svg>
        </CaptionButton>
        <CaptionButton aria-label="Close" $gap>
          <Svg w={8} h={7}><path d="M.5 0l7 7M7.500 0l-7 7" stroke="#000" strokeWidth="1.600" /></Svg>
        </CaptionButton>
      </TitleBar>

      <NavBar aria-label="Address">
        <RoundButton aria-label="Back"><BackIcon /></RoundButton>
        <RoundButton aria-label="Forward"><ForwardIcon /></RoundButton>
        <SmallButton aria-label="Recent pages"><HollowDown /></SmallButton>
        <AddressBox>
          <FolderIcon />
          <Crumbs>
            <CrumbArrow aria-label="Root"><CrumbDown /></CrumbArrow>
            {crumbs.map((c) => (
              <React.Fragment key={c}>
                <Crumb href="#">{c}</Crumb>
                <CrumbArrow aria-label={`Open ${c}`}><CrumbDown /></CrumbArrow>
              </React.Fragment>
            ))}
          </Crumbs>
          <IconButton aria-label="Previous locations" $w={30}><Down w={8} /></IconButton>
          <IconButton aria-label="Refresh"><RefreshIcon /></IconButton>
        </AddressBox>
        <SearchInput aria-label="Search Temp" placeholder="Search Temp" />
        <IconButton aria-label="Search"><MagnifierIcon /></IconButton>
      </NavBar>

      <Toolbar>
        <Command $w={78}>Organize<CommandArrow><Down /></CommandArrow></Command>
        <Command $w={83}>
          <CommandIcon><NotepadIcon /></CommandIcon>Open<CommandArrow><Down /></CommandArrow>
        </Command>
        <Command $w={87}>Share with<CommandArrow><Down /></CommandArrow></Command>
        <Command $w={39}>Print</Command>
        <Command $w={60}>New folder</Command>
        <ToolSpacer />
        <IconButton aria-label="Change view" $w={28}><ViewIcon /></IconButton>
        <IconButton aria-label="More view options"><Down /></IconButton>
        <IconButton aria-label="Preview pane" $w={34}><PaneIcon /></IconButton>
        <IconButton aria-label="Help" $w={22}><HelpIcon /></IconButton>
      </Toolbar>

      <Body>
        <Sidebar>
          {tree.map((group) => (
            <TreeGroup key={group[0].label}>
              {group.map(({ label, Icon, selected }, i) => (
                <li key={label}>
                  <TreeItem href="#" $child={i > 0} $selected={selected}>
                    <Icon />
                    <TreeLabel>{label}</TreeLabel>
                  </TreeItem>
                </li>
              ))}
            </TreeGroup>
          ))}
        </Sidebar>
        <Splitter />
        <ListPane>
          <FileTable>
            <Head>
              <HeadRow>
                <HeadCell>Name<Up w={5} fill="#8a8884" /></HeadCell>
                <HeadCell>Date modified</HeadCell>
                <HeadCell>Type</HeadCell>
                <HeadCell>Size</HeadCell>
                <HeadCell />
              </HeadRow>
            </Head>
            <Rows>
              {files.map(([kind, name, date, type, size]) => {
                const Icon = icons[kind];
                return (
                  <FileRow key={name} $selected={name === "dd_SetupUtility.txt"}>
                    <NameCell><Icon />{name}</NameCell>
                    <Cell>{date}</Cell>
                    <Cell>{type}</Cell>
                    <Cell $right>{size}</Cell>
                  </FileRow>
                );
              })}
            </Rows>
          </FileTable>
        </ListPane>
        <Scrollbar>
          <ScrollButton aria-label="Scroll up"><Up /></ScrollButton>
          <Thumb />
          <ScrollButton aria-label="Scroll down"><Down /></ScrollButton>
        </Scrollbar>
      </Body>

      <Details>
        <BigTextIcon />
        <DetailGrid>
          <DetailName>dd_SetupUtility.txt</DetailName>
          <DetailLabel>Date modified:</DetailLabel>
          <span>7/6/2023 6:29 PM</span>
          <DetailLabel>Date created:</DetailLabel>
          <span>7/6/2023 6:29 PM</span>
          <span>Text Document</span>
          <DetailLabel>Size:</DetailLabel>
          <span>488 bytes</span>
        </DetailGrid>
      </Details>

      <Taskbar>
        <StartButton><WindowsFlag />Start</StartButton>
        <TaskButton aria-label="Internet Explorer"><IeIcon /></TaskButton>
        <TaskButton aria-label="Explorer" $state="active"><LibraryIcon w={18} /></TaskButton>
        <TaskButton aria-label="Media Player"><PlayerIcon /></TaskButton>
        <TaskButton aria-label="Chrome"><ChromeIcon /></TaskButton>
        <TaskButton aria-label="Edge"><EdgeIcon /></TaskButton>
        <TaskButton aria-label="WinRAR" $state="open"><RarTaskIcon /></TaskButton>
        <TaskButton aria-label="Application" $state="open"><MaskIcon /></TaskButton>
        <Tray>
          <FlagIcon />
          <TrayNetIcon />
          <SpeakerIcon />
          <Clock>7:07 AM</Clock>
          <MonitorIcon />
        </Tray>
      </Taskbar>

      <Menu>
        {menu.map((m, i) =>
          m ? (
            <li key={m.label}>
              <MenuItem $bold={m.bold} $tall={m.tall}>
                <MenuIcon>{m.Icon && <m.Icon />}</MenuIcon>
                {m.label}
                {m.sub && <Right />}
              </MenuItem>
            </li>
          ) : (
            <Separator key={i} />
          )
        )}
      </Menu>

      <Watermark>ANY<PlayMark />RUN</Watermark>
    </Window>
  );
}
